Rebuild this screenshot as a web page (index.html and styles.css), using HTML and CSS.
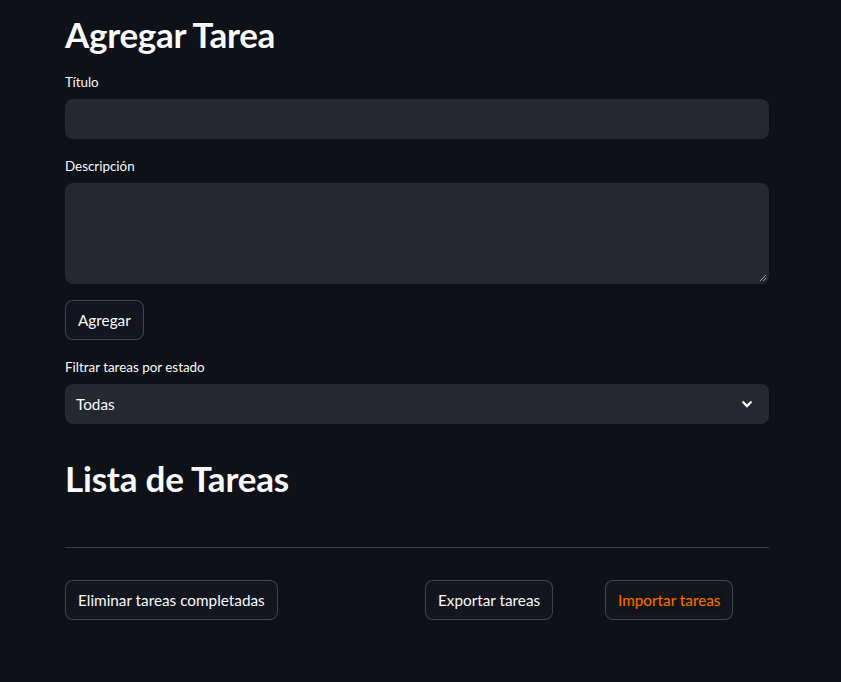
FILE: index.html
```html
<!DOCTYPE html>
<html lang="es">
<head>
<meta charset="utf-8">
<title>Tareas</title>
<link rel="stylesheet" href="styles.css">
</head>
<body>
<main class="container">
  <h1 class="title">Agregar Tarea</h1>
  <div class="field first">
    <label class="label">Título</label>
    <div class="input"></div>
  </div>
  <div class="field">
    <label class="label">Descripción</label>
    <div class="textarea">
      <svg class="grip" width="8" height="8" viewBox="0 0 8 8"><path d="M7 1L1 7M7 4L4 7" stroke="#9a9aa3" stroke-width="1"/></svg>
    </div>
  </div>
  <div class="btn-row"><button class="btn">Agregar</button></div>
  <div class="field">
    <label class="label">Filtrar tareas por estado</label>
    <div class="select">
      <span>Todas</span>
      <svg class="chev" width="12" height="8" viewBox="0 0 12 8"><path d="M1.5 1.5L6 6L10.5 1.5" fill="none" stroke="#fafafa" stroke-width="2.4"/></svg>
    </div>
  </div>
  <h2 class="title2">Lista de Tareas</h2>
  <hr class="divider">
  <div class="cols">
    <div class="col"><button class="btn">Eliminar tareas completadas</button></div>
    <div class="col"></div>
    <div class="col"><button class="btn">Exportar tareas</button></div>
    <div class="col"><button class="btn btn-orange"><span class="glow">Importar tareas</span></button></div>
  </div>
</main>
</body>
</html>
```
FILE: styles.css
```css
html, body {
  margin: 0;
  padding: 0;
  background: #0e1117;
  color: #fafafa;
  font-family: "Lato", "Noto Sans", sans-serif;
}
.container {
  width: 704px;
  margin-left: 65px;
  padding-top: 14px;
}
.title {
  margin: 0;
  font-size: 35px;
  font-weight: 700;
  line-height: 40px;
  letter-spacing: -0.3px;
}
.field {
  margin-top: 18px;
}
.field.first {
  margin-top: 19px;
}
.label {
  display: block;
  font-size: 13.4px;
  line-height: 18px;
  margin-bottom: 8px;
}
.input {
  height: 40px;
  background: #262730;
  border-radius: 8px;
}
.textarea {
  position: relative;
  height: 101px;
  background: #262730;
  border-radius: 8px;
}
.grip {
  position: absolute;
  right: 2px;
  bottom: 2px;
}
.btn-row {
  margin-top: 16px;
}
.btn {
  height: 40px;
  padding: 0 12px;
  background: #13161e;
  color: #fafafa;
  border: 1px solid rgba(250, 250, 250, 0.2);
  border-radius: 8px;
  font-family: inherit;
  font-size: 15.3px;
  white-space: nowrap;
}
.btn-wide {
  padding: 0 13px;
}
.select {
  height: 40px;
  background: #262730;
  border-radius: 8px;
  display: flex;
  align-items: center;
  justify-content: space-between;
  padding: 0 16px 0 11px;
  font-size: 15.3px;
}
.chev {
  display: block;
}
.title2 {
  margin: 34px 0 0 0;
  font-size: 35px;
  font-weight: 700;
  line-height: 40px;
  letter-spacing: -0.2px;
}
.divider {
  margin: 49px 0 0 0;
  border: 0;
  border-top: 1px solid rgba(250, 250, 250, 0.2);
  height: 0;
}
.cols {
  margin-top: 32px;
  display: grid;
  grid-template-columns: repeat(4, minmax(0, 1fr));
  gap: 16px;
}
.btn-orange {
  color: #ff6a00;
}
.glow {
  text-shadow: 0 0 2px #1c2300, 0 0 3px #1c2300, 0 0 4px #1c2300, 0 0 4px #1c2300;
}
```
